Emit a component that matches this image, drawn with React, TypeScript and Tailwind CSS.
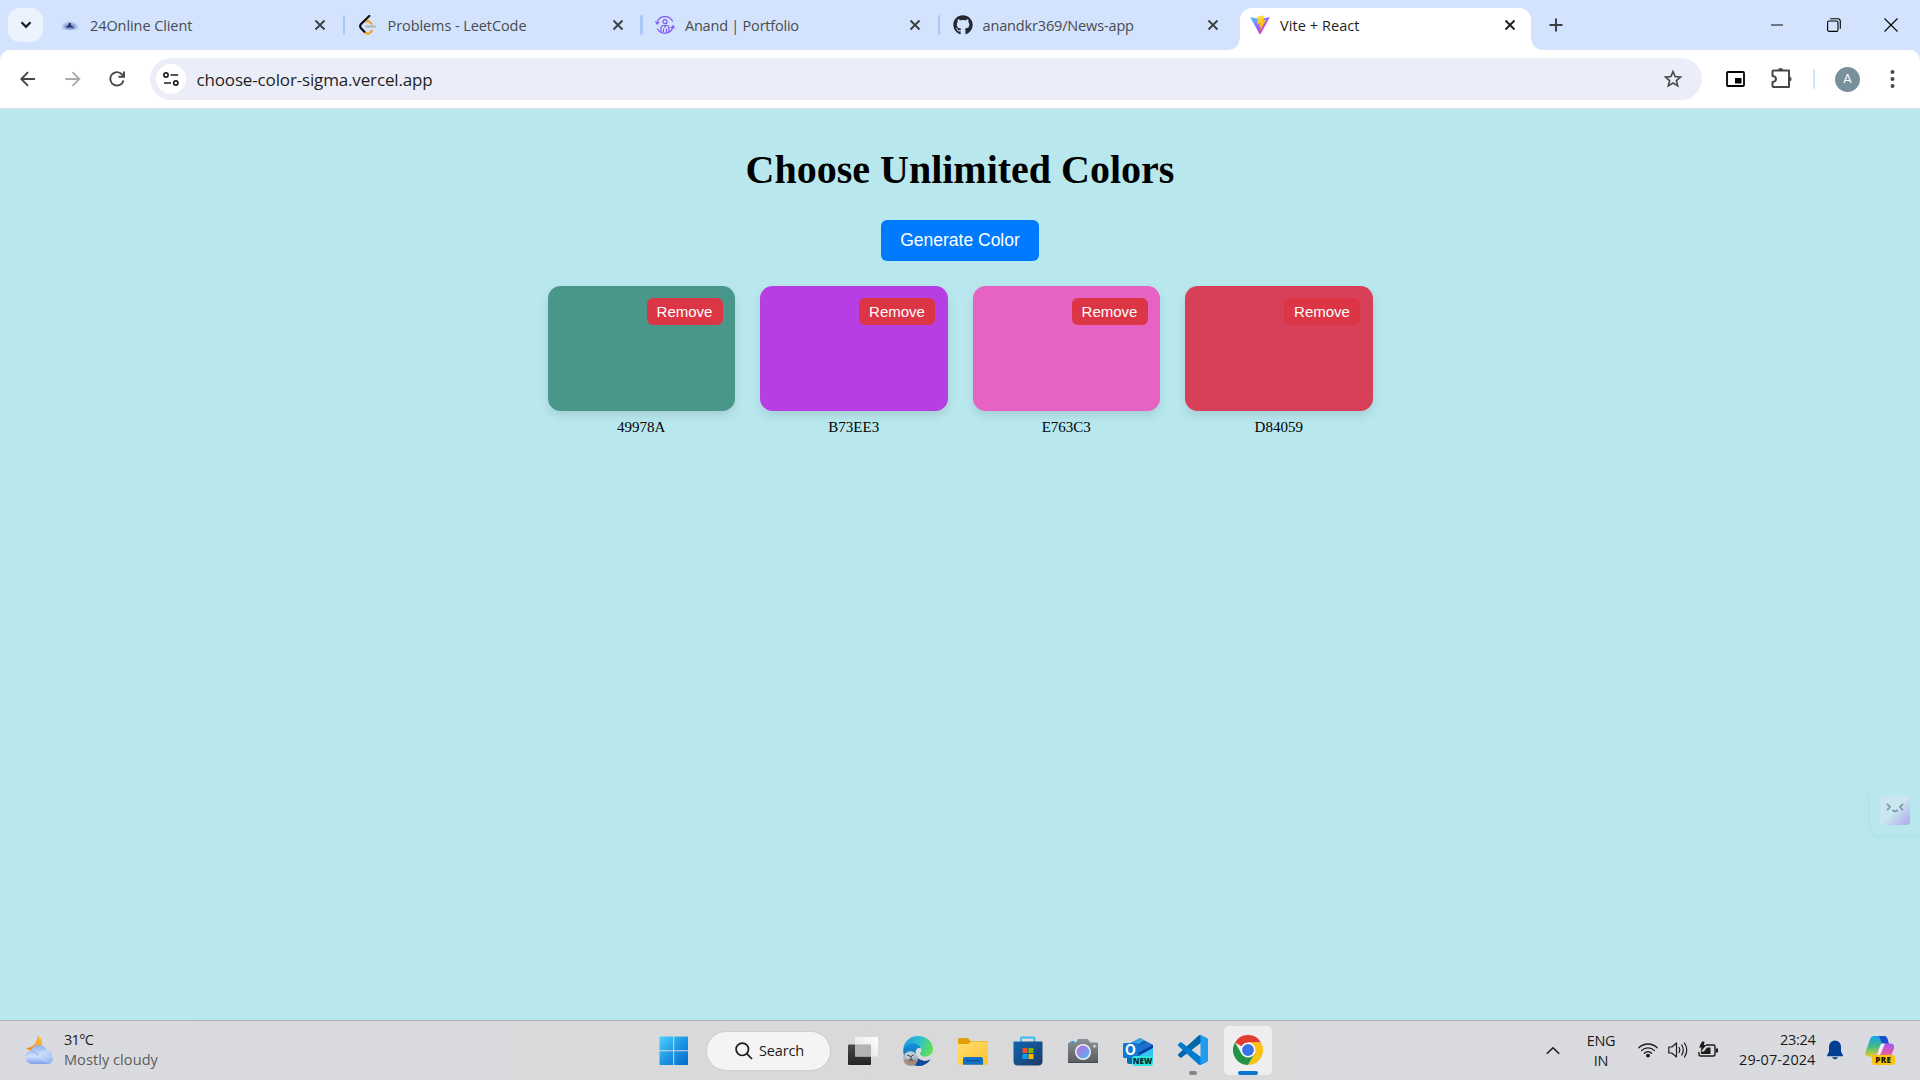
import React from "react";
import { FaGithub } from "react-icons/fa";

const ui = "font-['Open_Sans','Noto_Sans',sans-serif]";

function Close({ color = "#3c4043" }: { color?: string }) {
  return (
    <svg width="12" height="12" viewBox="0 0 12 12" fill="none" stroke={color} strokeWidth="1.900">
      <path d="M1.500 1.500 10.500 10.500M10.500 1.500 1.500 10.500" />
    </svg>
  );
}

function ClientIcon() {
  return (
    <svg width="20" height="20" viewBox="0 0 20 20">
      <defs>
        <radialGradient id="cl" cx=".5" cy=".6" r=".5">
          <stop offset="0" stopColor="#5468ab" />
          <stop offset=".55" stopColor="#8ea2dc" />
          <stop offset="1" stopColor="#bfd0f5" stopOpacity=".6" />
        </radialGradient>
      </defs>
      <path d="M1.500 14.500C1 8.500 5 6 10 6s9 2.500 8.500 8.500Q10 16 1.500 14.500Z" fill="url(#cl)" />
      <path d="M5.500 13 9 9.500l1.500.5 4 3.500-4.500-1.500z" fill="#20305f" />
      <circle cx="9.800" cy="9" r="1.200" fill="#2c3558" />
    </svg>
  );
}

function LeetIcon() {
  return (
    <svg width="20" height="20" viewBox="0 0 20 20" fill="none" strokeLinecap="round" strokeLinejoin="round">
      <path d="M8 11.500H17" stroke="#b3b3b3" strokeWidth="1.800" />
      <path d="M6.500 16.800q3 3 5.300 1.200l2-2" stroke="#f9a11b" strokeWidth="2.200" />
      <path d="m8.600 6.500 1.500-.7 3.500 3" stroke="#f9a11b" strokeWidth="2" />
      <path d="M11.300 1 2.800 9.300Q1.500 11 2.800 13l3.600 3.700" stroke="#0b0b0b" strokeWidth="2.200" />
    </svg>
  );
}

function PortfolioIcon() {
  return (
    <svg width="20" height="20" viewBox="0 0 20 20" fill="none" stroke="#8157f5" strokeWidth="1.200" strokeLinecap="round">
      <path d="M2 7.500A8.500 8.500 0 0 1 17.500 6M18 12A8.500 8.500 0 0 1 2.500 14" />
      <path d="m.8 7 1.400 2L4 7.200M16.200 12.800 18 10.800l1.300 2" />
      <circle cx="10" cy="6.700" r="2" />
      <path d="M6 16.500V13q0-2.500 2.500-2.500h3Q14 10.500 14 13v3.500M8.500 17v-3M11.500 17v-3M10 10.500v2" />
    </svg>
  );
}

function ViteIcon() {
  return (
    <svg width="20" height="20" viewBox="0 0 410 404">
      <defs>
        <linearGradient id="v1" x1="6" y1="33" x2="235" y2="344" gradientUnits="userSpaceOnUse">
          <stop stopColor="#41D1FF" />
          <stop offset="1" stopColor="#BD34FE" />
        </linearGradient>
        <linearGradient id="v2" x1="194.651" y1="8.818" x2="236.076" y2="292.989" gradientUnits="userSpaceOnUse">
          <stop stopColor="#FFEA83" />
          <stop offset=".083" stopColor="#FFDD35" />
          <stop offset="1" stopColor="#FFA800" />
        </linearGradient>
      </defs>
      <path d="M399.641 59.525 215.643 388.545c-3.799 6.793-13.559 6.834-17.415.073L10.582 59.556C6.381 52.190 12.680 43.267 21.028 44.759l184.195 32.923c1.175.21 2.378.208 3.553-.006l180.343-32.870c8.320-1.517 14.649 7.337 10.522 14.719z" fill="url(#v1)" />
      <path d="M292.965 1.574 156.801 28.255a5 5 0 0 0-4.030 4.611l-8.376 141.464c-.197 3.332 2.863 5.918 6.115 5.168l37.910-8.749c3.547-.818 6.752 2.306 6.023 5.873l-11.263 55.153c-.758 3.712 2.727 6.886 6.352 5.785l23.415-7.114c3.630-1.102 7.118 2.081 6.350 5.796l-17.899 86.633c-1.120 5.419 6.088 8.374 9.094 3.728l2.008-3.103 110.954-221.428c1.858-3.707-1.346-7.935-5.418-7.150l-39.022 7.532c-3.667.707-6.787-2.708-5.752-6.296l25.469-88.291c1.036-3.594-2.095-7.012-5.766-6.293z" fill="url(#v2)" />
    </svg>
  );
}

const tabs = [
  { title: "24Online Client", icon: <ClientIcon />, track: "tracking-[-0.08px]" },
  { title: "Problems - LeetCode", icon: <LeetIcon />, track: "tracking-[-0.08px]" },
  { title: "Anand | Portfolio", icon: <PortfolioIcon />, track: "tracking-[-0.22px]" },
  { title: "anandkr369/News-app", icon: <FaGithub size={20} color="#24292f" />, track: "tracking-[-0.15px]" },
];

function TabStrip() {
  return (
    <div className="flex h-[50px] bg-[#d3e3fd]">
      <button className="mt-2 ml-2 flex h-[34px] w-[35px] items-center justify-center rounded-xl bg-[#ecf3fe]">
        <svg width="12" height="8" viewBox="0 0 12 8" fill="none" stroke="#1f1f1f" strokeWidth="2.300"><path d="m1.500 1.300 4.500 4.500 4.500-4.500" /></svg>
      </button>
      <div className="ml-[5px] flex">
        {tabs.map((t, i) => (
          <div key={t.title} className="flex w-[297.500px] items-center pl-[12px]">
            <div className="flex w-[30px]">{t.icon}</div>
            <span className={`w-[212px] pt-[2px] text-[14.5px] whitespace-nowrap text-[#484b4f] ${t.track}`}>{t.title}</span>
            <div className="w-[12px] pl-[12px]" />
            <Close />
            <div className={i < 3 ? "ml-[16.500px] h-5 w-[2.500px] rounded-full bg-[#a8c7fa]" : "hidden"} />
          </div>
        ))}
      </div>
      <div className="relative ml-[2px] mt-[7.5px] flex h-[42.5px] w-[291px] items-center rounded-t-[12px] bg-white pr-[15px] pb-[7px] pl-[10px]">
        <svg className="absolute bottom-0 left-[-14px]" width="14" height="14" viewBox="0 0 14 14"><path d="M14 0v14H0Q14 14 14 0Z" fill="#fff" /></svg>
        <svg className="absolute right-[-14px] bottom-0" width="14" height="14" viewBox="0 0 14 14"><path d="M0 0v14h14Q0 14 0 0Z" fill="#fff" /></svg>
        <ViteIcon />
        <span className="ml-[10px] flex-1 pt-[2px] text-[14.5px] tracking-[0.07px] text-[#1f1f1f]">Vite + React</span>
        <Close color="#1f1f1f" />
      </div>
      <div className="flex flex-1 items-center pl-[18px]">
        <svg width="14" height="14" viewBox="0 0 14 14" stroke="#3c4043" strokeWidth="2"><path d="M7 .5v13M.5 7h13" /></svg>
        <div className="flex flex-1 items-center justify-end gap-[43.5px] pr-[22px] text-black">
          <svg width="12.500" height="14" viewBox="0 0 13 14" stroke="currentColor" strokeWidth="1"><path d="M0 7h13" /></svg>
          <svg width="14" height="14" viewBox="0 0 14 14" fill="none" stroke="currentColor" strokeWidth="1.100"><rect x=".6" y="3" width="10.400" height="10.400" rx="1.500" /><path d="M3.200.8h7.500q2.600 0 2.600 2.600v7.400" /></svg>
          <svg width="14" height="14" viewBox="0 0 14 14" stroke="currentColor" strokeWidth="1.100"><path d="m.5.5 13 13M13.500.5l-13 13" /></svg>
        </div>
      </div>
    </div>
  );
}

function Toolbar() {
  return (
    <div className="bg-[#d3e3fd]">
      <div className="flex h-[58px] items-center rounded-t-[10px] bg-white">
        <svg className="ml-[20px]" width="16" height="16" viewBox="0 0 16 16" fill="none" stroke="#474747" strokeWidth="1.900"><path d="M15 8H1.500M8 1.200 1.300 8 8 14.800" /></svg>
        <svg className="ml-[29px]" width="16" height="16" viewBox="0 0 16 16" fill="none" stroke="#ababab" strokeWidth="1.900"><path d="M.3 8h13.700M7.500 1.200 14.300 8 7.500 14.800" /></svg>
        <svg className="ml-[28px]" width="16" height="16" viewBox="0 0 16 16" fill="none" stroke="#474747" strokeWidth="1.900"><path d="M14.500 9.500A6.700 6.700 0 1 1 13 3.300L14.500 5M15 .5v5.200H9.500" /></svg>
        <div className="ml-[25px] flex h-[42px] w-[1552px] items-center rounded-full bg-[#ebeef8] pr-[19px] pl-[6px]">
          <div className="flex size-[30px] items-center justify-center rounded-full bg-white">
            <svg width="16" height="14" viewBox="0 0 16 14" fill="none" stroke="#1f1f1f" strokeWidth="1.700"><circle cx="3" cy="3" r="2.100" /><path d="M7.500 3H15M1 11h7" /><circle cx="12.800" cy="11" r="2.100" /></svg>
          </div>
          <span className="ml-[10.500px] flex-1 pt-px text-[17px] tracking-[-0.15px] text-[#1f1f1f]">choose-color-sigma.vercel.app</span>
          <svg width="20" height="20" viewBox="0 0 20 20" fill="none" stroke="#474747" strokeWidth="1.600"><path d="m10 2.600 2.100 5 5.400.5-4.100 3.500 1.300 5.300-4.700-2.900-4.700 2.900 1.300-5.300L2.500 8.100l5.400-.5z" /></svg>
        </div>
        <svg className="ml-[24px]" width="19" height="16" viewBox="0 0 19 16" fill="none"><rect x="1" y="1" width="17" height="14" rx="1" stroke="#000" strokeWidth="1.800" /><path d="M9 7h6.500v5.500H9z" fill="#000" /></svg>
        <svg className="mb-[2px] ml-[26px]" width="22" height="22" viewBox="0 0 22 22"><path d="M1.500 4.500q0-1 1-1h15.500v16.500H2.500q-1 0-1-1v-4q3.500-.3 3.500-3t-3.500-3z" fill="none" stroke="#474747" strokeWidth="2" strokeLinejoin="round" /><path d="M7 3.500a2.500 2.500 0 0 1 5 0zM18 9.500a2.500 2.500 0 0 1 0 5z" fill="#474747" /></svg>
        <div className="ml-[20px] h-[20px] w-[2px] rounded bg-[#d3e3fd]" />
        <div className="ml-[20px] flex size-[25px] items-center justify-center rounded-full bg-[#78909c] font-['Roboto',sans-serif] text-[13px] text-white">A</div>
        <svg className="ml-[30px]" width="5" height="20" viewBox="0 0 5 20" fill="#474747"><circle cx="2.500" cy="3" r="2" /><circle cx="2.500" cy="10" r="2" /><circle cx="2.500" cy="17" r="2" /></svg>
      </div>
    </div>
  );
}

const colors = [
  { code: "49978A", bg: "bg-[#49978a]" },
  { code: "B73EE3", bg: "bg-[#b73ee3]" },
  { code: "E763C3", bg: "bg-[#e763c3]" },
  { code: "D84059", bg: "bg-[#d84059]" },
];

function Page() {
  return (
    <main className="relative flex h-[911px] flex-col items-center bg-[#b8e8ee] pt-[38px]">
      <h1 className="h-[46px] font-['Liberation_Serif',serif] text-[40px] leading-[46px] font-bold whitespace-nowrap text-black">Choose Unlimited Colors</h1>
      <button className="mt-[27px] h-[41px] w-[158px] rounded-[6px] bg-[#007bff] pb-px font-['Liberation_Sans',sans-serif] text-[17.5px] whitespace-nowrap text-white">Generate Color</button>
      <div className="mt-[25px] flex gap-[25px]">
        {colors.map((c) => (
          <div key={c.code} className="flex w-[187.5px] flex-col items-center">
            <div className={`flex h-[125px] w-full items-start justify-end rounded-[12.5px] pt-[12px] pr-[12.5px] shadow-[0_5px_10px_rgba(0,0,0,0.1)] ${c.bg}`}>
              <button className="h-[27px] w-[76px] rounded-[6px] bg-[#dc3545] font-['Liberation_Sans',sans-serif] text-[15px] leading-[27px] text-white">Remove</button>
            </div>
            <span className="mt-[7px] font-['Liberation_Serif',serif] text-[15px] leading-[18px] text-black">{c.code}</span>
          </div>
        ))}
      </div>
      <div className="absolute top-[676px] right-0 flex h-[50px] w-[50px] rounded-l-[10px] bg-[#b8e7ed] pt-[10px] pl-[10px] shadow-[0_1px_4px_rgba(80,160,180,0.14)]">
        <div className="flex size-[30px] justify-center rounded-[4px] bg-linear-to-br from-[#c9e7ee] from-50% to-[#b0a4ea] pt-[8px]">
          <svg width="18" height="10" viewBox="0 0 18 10" fill="none" stroke="#7d9ba8" strokeWidth="1.800"><path d="m1 .8 3 3.200-3 3.200M17 .8 14 4l3 3.200M6.500 7q2.500 2.500 5 0" /></svg>
        </div>
      </div>
    </main>
  );
}

function Weather() {
  return (
    <svg width="32" height="32" viewBox="0 0 32 32">
      <defs>
        <linearGradient id="mo" x1="0" y1="1" x2="1" y2="0"><stop stopColor="#ee7a13" /><stop offset="1" stopColor="#f8cb45" /></linearGradient>
        <linearGradient id="cd" x1="0" y1="0" x2="0" y2="1"><stop stopColor="#8fb2f4" /><stop offset=".6" stopColor="#cfe0fb" /><stop offset="1" stopColor="#7f9fea" /></linearGradient>
        <linearGradient id="cd2" x1="0" y1="0" x2="1" y2="1"><stop stopColor="#e0ebfc" /><stop offset="1" stopColor="#91b0f2" /></linearGradient>
      </defs>
      <path d="M13 1q7 4 4.500 11-5 8-15.500 2.500Q14 12 13 1Z" fill="url(#mo)" />
      <path d="M8 30a6.500 6.500 0 0 1-1-12.900Q9 11 15 11t8.300 6A6.600 6.600 0 0 1 24 30Z" fill="url(#cd)" />
      <path d="M14 22q2-5.500 8-5.500a6.700 6.700 0 0 1 2 13Q16 27 14 22Z" fill="url(#cd2)" opacity=".75" />
      <path d="M1.800 22q3-6 9-3.500 2.500 1 3 3" stroke="#7fa3ee" fill="none" opacity=".7" />
    </svg>
  );
}

function StartIcon() {
  return (
    <svg width="30" height="30" viewBox="0 0 30 30">
      <defs><linearGradient id="st" x1="0" y1="0" x2="29" y2="29" gradientUnits="userSpaceOnUse"><stop stopColor="#51d1fd" /><stop offset=".5" stopColor="#1e97e4" /><stop offset="1" stopColor="#006bd0" /></linearGradient></defs>
      <path fill="url(#st)" d="M1 .5h13.200v13.700H.5V1zM15.200.5h13.300l.5.500v13.200H15.200zM.5 15.200h13.700V29H1l-.5-.5zM15.200 15.200H29v13.300l-.5.500H15.200z" />
    </svg>
  );
}

function TaskViewIcon() {
  return (
    <svg width="30" height="30" viewBox="0 0 30 30">
      <defs>
        <linearGradient id="tv" x1="0" y1="0" x2="0" y2="1"><stop stopColor="#4b4a48" /><stop offset="1" stopColor="#232221" /></linearGradient>
        <linearGradient id="tw" x1="0" y1="1" x2="1" y2="0"><stop stopColor="#dedede" /><stop offset="1" stopColor="#fff" /></linearGradient>
      </defs>
      <rect x="0" y="8.500" width="23" height="20.500" rx="1" fill="url(#tv)" />
      <rect x="7" y="1" width="23" height="19.500" rx="1" fill="url(#tw)" />
      <path d="M7 8.500h16v12H7z" fill="#b3b3b1" />
    </svg>
  );
}

function EdgeIcon() {
  return (
    <svg width="30" height="30" viewBox="0 0 30 30">
      <defs>
        <linearGradient id="e1" x1="0" y1=".3" x2="1" y2=".6"><stop stopColor="#1d9ee8" /><stop offset=".5" stopColor="#2cc3c6" /><stop offset="1" stopColor="#66e14f" /></linearGradient>
        <linearGradient id="e2" x1="0" y1="0" x2="0" y2="1"><stop stopColor="#1593df" /><stop offset="1" stopColor="#0c59a4" /></linearGradient>
      </defs>
      <path d="M.2 15C0 6 7 0 15 0c9 0 15 6.500 15 13 0 5-4 7.500-8 7.500-4.500 0-6-2-4.800-3.500Q20 13 16 9.500 9 5.500.2 15Z" fill="url(#e1)" />
      <path d="M.2 15Q2 7.500 9.500 7.300q6.500 0 8.500 5-4-1.500-5.500 3Q12 23 20 25.500q4 .5 7.500-2Q23 30 15 30 1 29 .2 15Z" fill="url(#e2)" />
      <path d="M12.500 15.500q-.5 8 9 9.500 3.500 0 5.800-1.800Q23 30 15 30q-6-5-2.500-14.500Z" fill="#114a9b" />
      <path d="M14 14.500q1-3 3.500-2.200 1.500 2-.3 4.700-1.200 1.500 1.800 3l-3 1q-3-2-2-6.500Z" fill="#d9dadb" />
      <circle cx="7.500" cy="22.500" r="7.300" fill="#a9b7c8" />
      <path d="M.5 24q7-2 14.200 0Q13 29.800 7.500 29.800 2 29.500.5 24Z" fill="#a48d7c" />
      <path d="M2 18q5-5 11 0l-2 3-8 1z" fill="#c4ced8" />
      <path d="m4 19 4 1.500 3-2M8 20v3l-1.500 2.500M8 23l2 2.500" stroke="#41454c" strokeWidth="1" fill="none" />
    </svg>
  );
}

function FolderIcon() {
  return (
    <svg width="30" height="30" viewBox="0 0 30 30">
      <defs><linearGradient id="fo" x1="0" y1="0" x2="1" y2="1"><stop stopColor="#ffdf72" /><stop offset="1" stopColor="#fdc22d" /></linearGradient></defs>
      <path d="M0 3.500Q0 2 1.500 2H10l2.500 3H28.500Q30 5 30 6.500V12H0z" fill="#e0a00c" />
      <path d="M0 8h10.500l2.500-2.500H30v22q0 1.200-1.200 1.200H1.200Q0 28.700 0 27.500z" fill="url(#fo)" />
      <path d="M5 28.700V23q0-2 2-2h16q2 0 2 2v5.700z" fill="#1271c4" />
      <path d="M8.500 24.700h13" stroke="#0a4d91" strokeWidth="1.200" />
    </svg>
  );
}

function StoreIcon() {
  return (
    <svg width="30" height="30" viewBox="0 0 30 30">
      <defs><linearGradient id="so" x1="0" y1="0" x2="1" y2="1"><stop stopColor="#0f66b3" /><stop offset="1" stopColor="#1d3a66" /></linearGradient></defs>
      <path d="M8 7V2.500Q8 1.500 9 1.500h11.500q1 0 1 1V7" fill="none" stroke="#35bdf0" strokeWidth="2" />
      <path d="M.5 5.500h29V25q0 4.500-4.500 4.500H5Q.5 29.500.5 25z" fill="url(#so)" />
      <path d="M9.500 12H14.500v5H9.500z" fill="#f25022" /><path d="M15.500 12h5v5h-5z" fill="#7fba00" /><path d="M9.500 18h5v5h-5z" fill="#00a4ef" /><path d="M15.500 18h5v5h-5z" fill="#ffb900" />
    </svg>
  );
}

function CameraIcon() {
  return (
    <svg width="30" height="30" viewBox="0 0 30 30">
      <defs>
        <linearGradient id="ca" x1="0" y1="0" x2="0" y2="1"><stop stopColor="#8b9196" /><stop offset="1" stopColor="#585c61" /></linearGradient>
        <linearGradient id="cb" x1="0" y1="0" x2="1" y2="1"><stop stopColor="#bb72e0" /><stop offset=".5" stopColor="#8d8ae8" /><stop offset="1" stopColor="#3cc8ee" /></linearGradient>
      </defs>
      <path d="M2 7q0-2 2-2h1.500q1.500 0 1.500 2z" fill="#2aa3dc" />
      <path d="M0 8q0-1.500 1.500-1.500H8l2-3.500h10l2 3.500h6.500Q30 6.500 30 8v19H0z" fill="url(#ca)" />
      <path d="M0 26h30v1H0z" fill="#44474b" />
      <circle cx="15" cy="16" r="8" fill="#eceff1" /><circle cx="15" cy="16" r="6.500" fill="url(#cb)" />
      <path d="M26.500 8.500v3.500M24.800 10.200h3.500" stroke="#cfd3d6" strokeWidth="1.300" />
    </svg>
  );
}

function OutlookIcon() {
  return (
    <div className="relative flex size-[30px]">
      <svg width="30" height="30" viewBox="0 0 30 30">
        <path d="M4 9 17 2l13 7v17q0 2-2 2H6q-2 0-2-2z" fill="#1066b5" />
        <path d="m6 9 11-7 4 2.300-11 8z" fill="#3aa5e8" /><path d="m12 12 12-6 5.500 3L17 17z" fill="#1d6fd0" />
        <path d="m15 17 15-8v5L18 19z" fill="#04419a" /><path d="M17 19 30 12v14q0 2-2 2H14z" fill="#36c3f2" />
        <rect x="0" y="7" width="15" height="15" rx="1.300" fill="#1078d4" />
      </svg>
      <span className="absolute top-[4px] left-[2px] font-['Inter',sans-serif] text-[14px] leading-[20px] font-bold text-white">O</span>
      <span className="absolute top-[20px] left-[9px] flex h-[10px] w-[21px] items-center justify-center rounded-[3px] bg-[#2fe4e2] font-['Open_Sans',sans-serif] text-[8px] leading-[10px] font-extrabold text-[#07292d]">NEW</span>
    </div>
  );
}

function CodeIcon() {
  return (
    <svg width="30" height="30" viewBox="0 0 100 100">
      <path d="M96.500 10.700 75.900.8a6.200 6.200 0 0 0-7.100 1.200L1.300 63.500a4.200 4.200 0 0 0 0 6.200l5.500 5a4.200 4.200 0 0 0 5.300.2L93.400 13.300c2.700-2.100 6.600-.1 6.600 3.300v-.3c0-2.400-1.400-4.600-3.500-5.600Z" fill="#0065a9" />
      <path d="m96.500 89.300-20.600 9.900a6.200 6.200 0 0 1-7.100-1.200L1.300 36.500a4.200 4.200 0 0 1 0-6.200l5.500-5a4.200 4.200 0 0 1 5.300-.2l81.300 61.600c2.700 2.100 6.600.1 6.600-3.300v.3c0 2.400-1.400 4.600-3.500 5.600Z" fill="#007acc" />
      <path d="M75.900 99.200a6.200 6.200 0 0 1-7.100-1.200c2.300 2.300 6.200.7 6.200-2.600V4.600c0-3.300-3.900-4.900-6.200-2.600A6.200 6.200 0 0 1 75.900.8l20.600 9.900a6.200 6.200 0 0 1 3.500 5.600v67.400c0 2.400-1.400 4.600-3.500 5.600Z" fill="#1f9cf0" />
    </svg>
  );
}

function ChromeIcon() {
  return (
    <svg width="30" height="30" viewBox="0 0 48 48">
      <path d="M24 24 3.200 12A24 24 0 0 1 44.800 12H24z" fill="#e33b2e" />
      <path d="M24 12h20.800A24 24 0 0 1 24 48l10.400-18z" fill="#fbc116" />
      <path d="M34.400 30 24 48A24 24 0 0 1 3.200 12l10.400 18z" fill="#229342" />
      <circle cx="24" cy="24" r="12" fill="#fff" /><circle cx="24" cy="24" r="9.500" fill="#3674e8" />
    </svg>
  );
}

function CopilotIcon() {
  return (
    <div className="relative flex size-[30px]">
      <svg width="30" height="30" viewBox="0 0 30 30">
        <defs>
          <linearGradient id="p1" x1="0" y1="0" x2="0" y2="1"><stop stopColor="#12a5ee" /><stop offset=".5" stopColor="#43b88c" /><stop offset="1" stopColor="#e5cf24" /></linearGradient>
          <linearGradient id="p2" x1="0" y1="0" x2="0" y2="1"><stop stopColor="#a45af0" /><stop offset=".6" stopColor="#e35aa8" /><stop offset="1" stopColor="#fb8a55" /></linearGradient>
        </defs>
        <path d="M9 1h10q2.500 0 3.500 3l1.500 5-9 2-4 9q-1 1.500-3 1.500H4Q-.5 21.500.5 17L5 4.500Q6 1 9 1Z" fill="url(#p1)" />
        <path d="M14 1h5q2.500 0 3.500 3l1.500 5h-7z" fill="#1b4fd0" />
        <path d="M18 8.500h8q4 .5 3 5L26 21q-1 3-4 3H10q-3 0-4-2.500h2.500q2 0 3-2L15 11q1-2.500 3-2.500Z" fill="url(#p2)" />
        <path d="M17 8.500h3L15.500 19q-1 2-4 2.500L15 11q.7-2 2-2.500Z" fill="#f1f1f6" />
      </svg>
      <span className="absolute top-[20px] left-[7px] flex h-[9.500px] w-[22.500px] items-center justify-center rounded-[3px] bg-[#f9c513] font-['Open_Sans',sans-serif] text-[8px] leading-[9px] font-extrabold tracking-[0.4px] text-[#221b00]">PRE</span>
    </div>
  );
}

const apps = [<TaskViewIcon />, <EdgeIcon />, <FolderIcon />, <StoreIcon />, <CameraIcon />, <OutlookIcon />];

function Taskbar() {
  return (
    <footer className="flex h-[60px] items-center border-t border-[#aeb0b3] bg-linear-to-r from-[#dadbe0] via-[#d9d9da] via-45% to-[#dadbe0]">
      <div className="flex w-[659px] items-center pb-[2px] pl-[24px]">
        <Weather />
        <div className="ml-[8px] flex flex-col text-[14.5px] leading-[20px]">
          <span className="tracking-[-0.7px] text-[#1b1b1b]">31°C</span>
          <span className="tracking-[0.08px] text-[#5b5c5e]">Mostly cloudy</span>
        </div>
      </div>
      <StartIcon />
      <div className="ml-[18px] flex h-[38px] w-[123px] items-center rounded-full bg-[#f4f4f4] pl-[28px] shadow-[0_0_1px_1px_rgba(0,0,0,0.05)]">
        <svg width="18" height="18" viewBox="0 0 18 18" fill="none" stroke="#1b1b1b" strokeWidth="1.700"><circle cx="7.300" cy="7.300" r="6.200" /><path d="m11.700 11.700 5.300 5.300" /></svg>
        <span className="ml-[6px] text-[14.5px] tracking-[-0.15px] text-[#1b1b1b]">Search</span>
      </div>
      <div className="ml-[18px] flex gap-[25px]">
        {apps.map((a, i) => <div key={i} className="flex size-[30px]">{a}</div>)}
      </div>
      <div className="ml-[25px] flex h-[49px] w-[30px] flex-col items-center justify-between pt-[9px]">
        <CodeIcon />
        <div className="h-[4px] w-[8px] rounded-full bg-[#858585]" />
      </div>
      <div className="ml-[16px] flex h-[49px] w-[48px] flex-col items-center justify-between rounded-[5px] bg-[#eeeef0] pt-[9px]">
        <ChromeIcon />
        <div className="h-[4px] w-[20px] rounded-full bg-[#0a74d1]" />
      </div>
      <svg className="mb-px ml-[274px]" width="14" height="9" viewBox="0 0 14 9" fill="none" stroke="#1b1b1b" strokeWidth="1.600"><path d="m.8 7.800 6.200-6 6.200 6" /></svg>
      <div className="ml-[26px] flex w-[30px] flex-col items-center text-[14.5px] leading-[20px] tracking-[-0.3px] text-[#1b1b1b]"><span>ENG</span><span>IN</span></div>
      <svg className="mb-[2px] ml-[22px]" width="20" height="16" viewBox="0 0 20 16" fill="none" stroke="#1b1b1b" strokeWidth="1.300" strokeLinecap="round"><path d="M.8 5.800a13 13 0 0 1 18.400 0M3.600 8.600a9 9 0 0 1 12.800 0M6.400 11.200a5.200 5.200 0 0 1 7.200 0" /><circle cx="10" cy="13.600" r="1.300" fill="#1b1b1b" /></svg>
      <svg className="mb-[2px] ml-[10px]" width="20" height="18" viewBox="0 0 20 18" fill="none" stroke="#1b1b1b" strokeWidth="1.200" strokeLinecap="round" strokeLinejoin="round"><path d="M.8 6h3L8.500 2v14L3.800 12h-3zM11 6.500q1.500 2.500 0 5M13.800 4q3 5 0 10M16.500 2q4.500 7 0 14" /></svg>
      <svg className="mb-[3px] ml-[10px]" width="20" height="17" viewBox="0 0 20 17" fill="none" stroke="#1b1b1b" strokeWidth="1.400"><path d="M8 4h7.500q1.500 0 1.500 1.500v8q0 1.500-1.500 1.500h-13Q1 15 1 13.500V11" /><path d="M9 6.500h3.500V13H3v-2.500h3z" fill="#1b1b1b" stroke="none" /><path d="M4 .5h2.500L6 4h2.500L2.500 11l1-4.500H1z" fill="#1b1b1b" stroke="none" /><path d="M18 7.500h2v4h-2z" fill="#1b1b1b" stroke="none" /></svg>
      <div className="flex w-[97.500px] flex-col items-end pb-[2px] text-[14.5px] leading-[20px] text-[#1b1b1b]"><span className="tracking-[-0.3px]">23:24</span><span className="tracking-[0.08px]">29-07-2024</span></div>
      <svg className="mb-px ml-[11.500px]" width="16" height="20" viewBox="0 0 16 20" fill="#003f94"><path d="M8 .5a6 6 0 0 1 6 6v5l2 4v.8H0v-.8l2-4v-5a6 6 0 0 1 6-6ZM5 17.300h6q-1 2-3 2t-3-2Z" /></svg>
      <div className="mb-px ml-[22px] flex"><CopilotIcon /></div>
    </footer>
  );
}

export default function App() {
  return (
    <div className={`flex h-[1080px] w-[1920px] flex-col overflow-hidden ${ui}`}>
      <TabStrip />
      <Toolbar />
      <div className="h-px bg-[#d9dfe2]" />
      <Page />
      <Taskbar />
    </div>
  );
}
